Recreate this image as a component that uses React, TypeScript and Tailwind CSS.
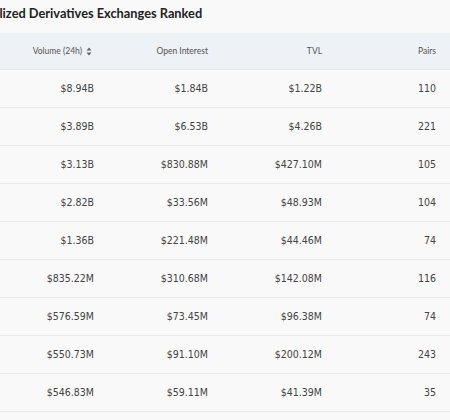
import React from "react";

interface ExchangeRow {
  volume: string;
  openInterest: string;
  tvl: string;
  pairs: number;
}

const rows: ExchangeRow[] = [
  { volume: "$8.94B", openInterest: "$1.84B", tvl: "$1.22B", pairs: 110 },
  { volume: "$3.89B", openInterest: "$6.53B", tvl: "$4.26B", pairs: 221 },
  { volume: "$3.13B", openInterest: "$830.88M", tvl: "$427.10M", pairs: 105 },
  { volume: "$2.82B", openInterest: "$33.56M", tvl: "$48.93M", pairs: 104 },
  { volume: "$1.36B", openInterest: "$221.48M", tvl: "$44.46M", pairs: 74 },
  { volume: "$835.22M", openInterest: "$310.68M", tvl: "$142.08M", pairs: 116 },
  { volume: "$576.59M", openInterest: "$73.45M", tvl: "$96.38M", pairs: 74 },
  { volume: "$550.73M", openInterest: "$91.10M", tvl: "$200.12M", pairs: 243 },
  { volume: "$546.83M", openInterest: "$59.11M", tvl: "$41.39M", pairs: 35 },
];

const SortIcon = () => (
  <svg width="6" height="9" viewBox="0 0 6 9" className="ml-[4px]">
    <path d="M3 0.5 L5.5 3.5 L0.5 3.5 Z" fill="#666" />
    <path d="M3 8.5 L5.5 5.5 L0.5 5.5 Z" fill="#666" />
  </svg>
);

const gridCols = "grid grid-cols-[108px_114px_114px_114px]";

const App: React.FC = () => {
  return (
    <div className="w-[450px] h-[420px] overflow-hidden bg-[#f9f9f9]">
      {/* Title, scrolled partly out of view */}
      <div className="h-[33px] pt-[4px]">
        <h2
          className="-ml-[53px] whitespace-nowrap text-[12.8px] leading-[18px] font-bold text-[#222]"
          style={{ fontFamily: "Lato, 'Open Sans', sans-serif" }}
        >
          Decentralized Derivatives Exchanges Ranked
        </h2>
      </div>

      {/* Table header */}
      <div
        className={`${gridCols} h-[37px] items-center bg-[#eef1f6] border-b border-[#e6e9ee] text-[8.5px] text-[#555]`}
        style={{ fontFamily: "Lato, 'Open Sans', sans-serif" }}
      >
        <div className="flex items-center justify-end pr-[16px]">
          Volume (24h)
          <SortIcon />
        </div>
        <div className="text-right pr-[14px]">Open Interest</div>
        <div className="text-right pr-[14px]">TVL</div>
        <div className="text-right pr-[14px]">Pairs</div>
      </div>

      {/* Rows */}
      <div
        className="text-[10.5px] text-[#444]"
        style={{ fontFamily: "'Liberation Sans Narrow', 'DejaVu Sans Condensed', sans-serif" }}
      >
        {rows.map((row, i) => (
          <div
            key={i}
            className={`${gridCols} h-[38px] items-center border-b border-[#ebebeb]`}
          >
            <div className="text-right pr-[14px]">{row.volume}</div>
            <div className="text-right pr-[14px]">{row.openInterest}</div>
            <div className="text-right pr-[14px]">{row.tvl}</div>
            <div className="text-right pr-[14px]">{row.pairs}</div>
          </div>
        ))}
      </div>
    </div>
  );
};

export default App;
